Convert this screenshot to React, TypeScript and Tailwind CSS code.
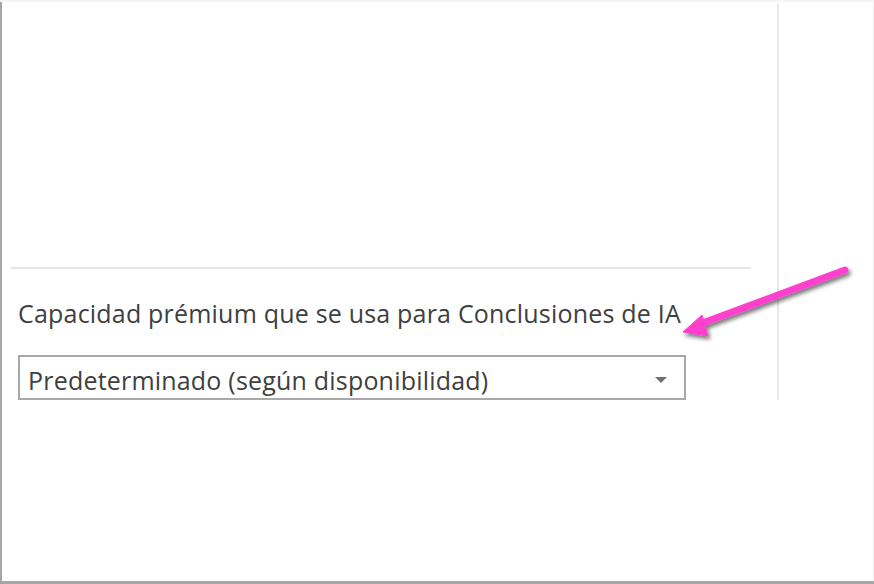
import React from "react";

function Arrow() {
  return (
    <svg className="absolute left-0 top-0" width="874" height="584" viewBox="0 0 874 584">
      <defs>
        <filter id="sh" x="-20%" y="-20%" width="140%" height="140%">
          <feGaussianBlur in="SourceAlpha" stdDeviation="2" />
          <feOffset dx="2" dy="3" result="b" />
          <feComponentTransfer>
            <feFuncA type="linear" slope="0.55" />
          </feComponentTransfer>
          <feMerge>
            <feMergeNode />
            <feMergeNode in="SourceGraphic" />
          </feMerge>
        </filter>
      </defs>
      <g filter="url(#sh)" fill="#ff3fcf" stroke="#ff3fcf">
        <line x1="845" y1="270" x2="700" y2="324" strokeWidth="7" strokeLinecap="round" />
        <polygon points="683,332 702,315 708,336" strokeWidth="1" strokeLinejoin="round" />
      </g>
    </svg>
  );
}

export default function App() {
  return (
    <div
      className="relative w-[874px] h-[584px] overflow-hidden bg-white"
      style={{ fontFamily: '"Open Sans", "Noto Sans", sans-serif' }}
    >
      <div className="h-[2px] bg-[#f4f4f4]" />
      <div className="flex h-[582px] border-l-2 border-b-[3px] border-[#a6a6a6]">
        <div className="mt-[2px] flex h-[396px] w-[777px] flex-col border-r-2 border-[#e8e8e8]">
          <div className="h-[263px] shrink-0" />
          <div className="ml-[9px] h-[2px] w-[740px] shrink-0 bg-[#e6e6e6]" />
          <div className="ml-[16px] mt-[27px] text-[25px] leading-[34px] tracking-[0.2px] text-[#404040]">
            Capacidad prémium que se usa para Conclusiones de IA
          </div>
          <div className="ml-[16px] mt-[25px] flex h-[45px] w-[668px] shrink-0 items-start justify-between overflow-hidden border-2 border-[#a8a8a8] pl-[8px] pr-[17px] pt-[6px]">
            <span className="text-[25px] leading-[34px] tracking-[0.2px] text-[#404040]">
              Predeterminado (según disponibilidad)
            </span>
            <svg className="mt-[14px]" width="12" height="6" viewBox="0 0 12 6">
              <polygon points="0,0 12,0 6,6" fill="#707070" />
            </svg>
          </div>
        </div>
        <div className="flex-1 border-r border-[#f0f0f0]" />
      </div>
      <Arrow />
    </div>
  );
}
